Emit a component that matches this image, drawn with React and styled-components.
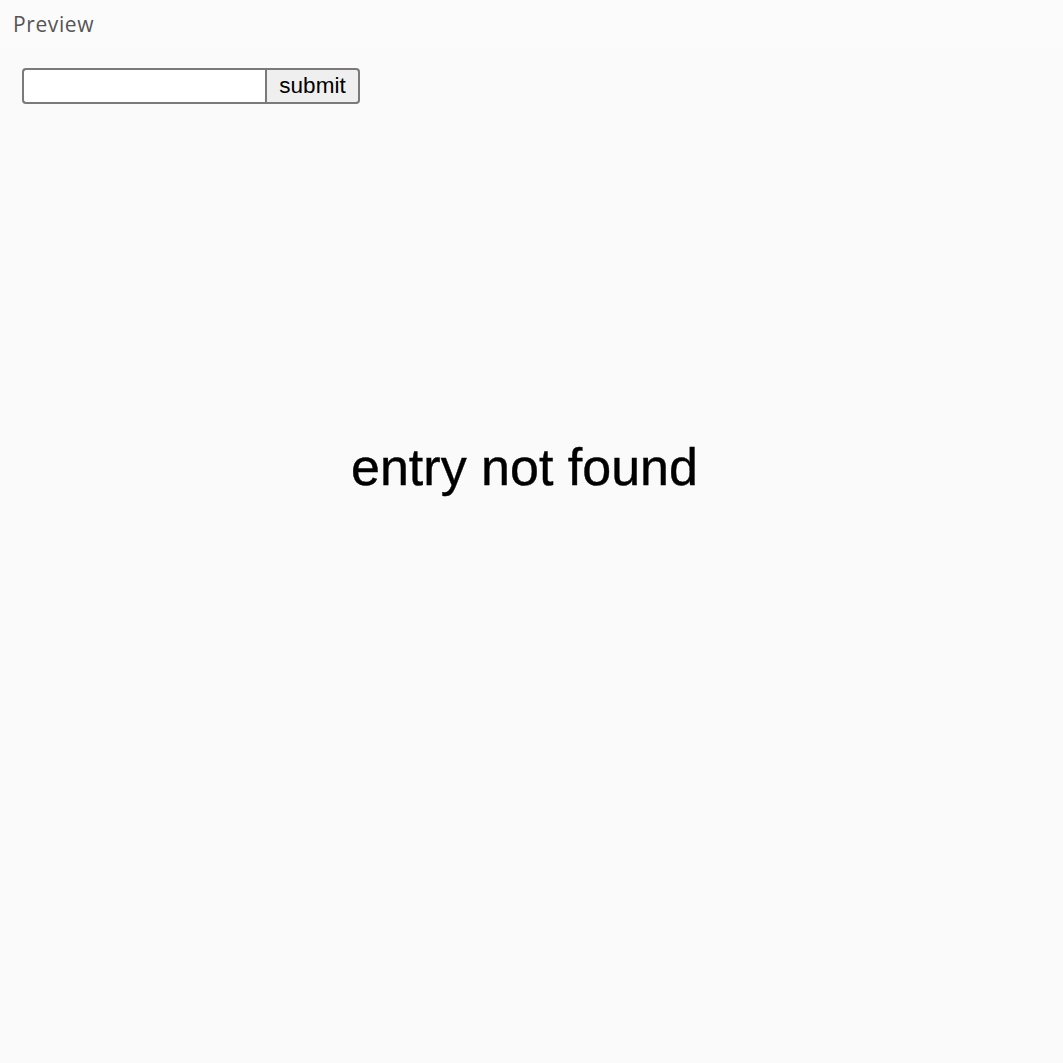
import React, { useState } from "react";
import styled, { createGlobalStyle } from "styled-components";

const GlobalStyle = createGlobalStyle`
  html, body {
    margin: 0;
    padding: 0;
    background: #fafafa;
  }
  body {
    font-family: "Liberation Sans", Arial, sans-serif;
  }
`;

const Page = styled.div`
  min-height: 1063px;
  display: flex;
  flex-direction: column;
`;

const TopBar = styled.div`
  height: 48px;
  display: flex;
  align-items: center;
  padding-left: 13px;
  background: #fbfbfb;
  font-family: "Open Sans", Lato, sans-serif;
  font-size: 21px;
  letter-spacing: 0.6px;
  color: #555;
  margin-bottom: 2px;
`;

const SearchForm = styled.form`
  display: flex;
  margin: 18px 0 0 22px;
`;

const SearchInput = styled.input`
  box-sizing: border-box;
  width: 243px;
  height: 36px;
  border: 2px solid #7a7a7a;
  border-right: none;
  border-radius: 4px 0 0 4px;
  background: #fff;
  font-family: "Liberation Sans", Arial, sans-serif;
  font-size: 20px;
  padding: 0 6px;
  outline: none;
`;

const SubmitButton = styled.button`
  box-sizing: border-box;
  width: 95px;
  height: 36px;
  border: 2px solid #7a7a7a;
  border-radius: 0 4px 4px 0;
  background: #efefef;
  color: #000;
  font-family: "Liberation Sans", Arial, sans-serif;
  font-size: 22.5px;
  padding: 0;
  cursor: pointer;
`;

const Message = styled.div`
  margin-top: 333px;
  text-align: center;
  font-size: 52px;
  line-height: 60px;
  color: #000;
  padding-right: 14px;
  -webkit-text-stroke: 0.4px #000;
`;

const App = () => {
  const [query, setQuery] = useState("");

  const submitHandler = (e) => {
    e.preventDefault();
  };

  return (
    <>
      <GlobalStyle />
      <Page>
        <TopBar>Preview</TopBar>
        <SearchForm onSubmit={submitHandler}>
          <SearchInput value={query} onChange={(e) => setQuery(e.target.value)} />
          <SubmitButton type="submit">submit</SubmitButton>
        </SearchForm>
        <Message>entry not found</Message>
      </Page>
    </>
  );
};

export default App;
